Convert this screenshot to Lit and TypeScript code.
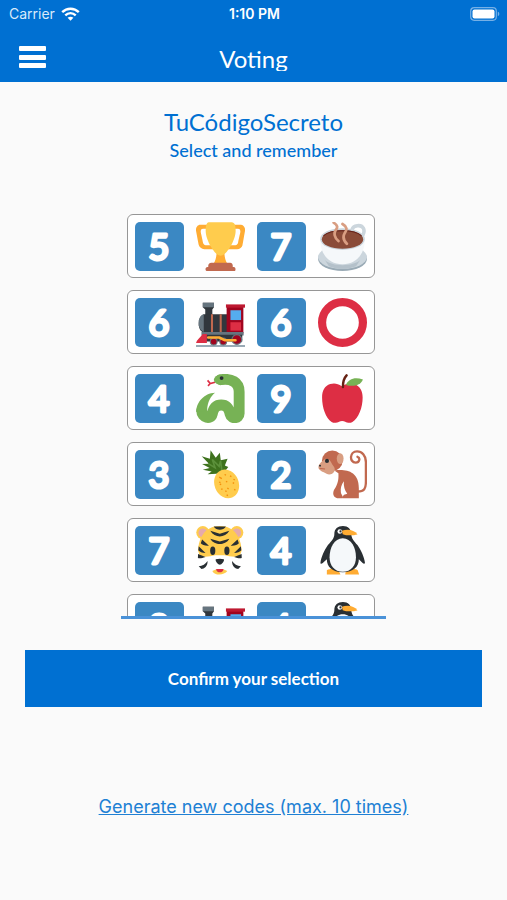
import { LitElement, html, svg, css } from "lit";
import { customElement, state } from "lit/decorators.js";
import { classMap } from "lit/directives/class-map.js";

const pictures: Record<string, unknown> = {
  trophy: svg`
    <path fill="#FFAC33" d="M5.123 5h6C12.227 5 13 4.896 13 6V4c0-1.104-.773-2-1.877-2h-8c-2 0-3.583 2.125-3 5 0 0 1.791 9.375 1.917 9.958C2.373 18.5 4.164 20 6.081 20h6.958c1.105 0-.039-1.896-.039-3v-2c0 1.104-.773 2-1.877 2h-4c-1.104 0-1.833-1.042-2-2S3.539 7.667 3.539 7.667C3.206 5.75 4.018 5 5.123 5zm25.812 0h-6C23.831 5 22 4.896 22 6V4c0-1.104 1.831-2 2.935-2h8c2 0 3.584 2.125 3 5 0 0-1.633 9.419-1.771 10-.354 1.5-2.042 3-4 3h-7.146C21.914 20 22 18.104 22 17v-2c0 1.104 1.831 2 2.935 2h4c1.104 0 1.834-1.042 2-2s1.584-7.333 1.584-7.333C32.851 5.75 32.04 5 30.935 5zM20.832 22c0-6.958-2.709 0-2.709 0s-3-6.958-3 0-3.291 10-3.291 10h12.292c-.001 0-3.292-3.042-3.292-10z"/>
    <path fill="#FFCC4D" d="M29.123 6.577c0 6.775-6.77 18.192-11 18.192-4.231 0-11-11.417-11-18.192 0-5.195 1-6.319 3-6.319 1.374 0 6.025-.027 8-.027l7-.001c2.917-.001 4 .684 4 6.347z"/>
    <path fill="#C1694F" d="M27 33c0 1.104.227 2-.877 2h-16C9.018 35 9 34.104 9 33v-1c0-1.104 1.164-2 2.206-2h13.917c1.042 0 1.877.896 1.877 2v1z"/>
    <path fill="#C1694F" d="M29 34.625c0 .76.165 1.375-1.252 1.375H8.498C7.206 36 7 35.385 7 34.625v-.25C7 33.615 7.738 33 8.498 33h19.25c.759 0 1.252.615 1.252 1.375v.25z"/>`,
  coffee: svg`
    <ellipse cx="18" cy="27" rx="18" ry="9" fill="#99AAB5"/>
    <ellipse cx="18" cy="25.8" rx="18" ry="8.6" fill="#CCD6DD"/>
    <path d="M5 28c5 5 21 5 26 0l-3 4.500c-6 2.500-14 2.500-20 0z" fill="#B4C1CA"/>
    <path d="M25 5.500C26 2.500 31.500 1.500 33.300 4.500c1.300 2.500-.3 6-3.300 9" fill="none" stroke="#CCD6DD" stroke-width="2.600"/>
    <path d="M1.600 12.500C1.600 24 8 31 18 31s16.400-7 16.400-18.500z" fill="#F5F8FA"/>
    <ellipse cx="18" cy="12.500" rx="16.400" ry="8" fill="#CCD6DD"/>
    <ellipse cx="18" cy="12.800" rx="15.200" ry="6.900" fill="#8A4B38"/>
    <path d="M4 10.200c5-5 23-5 28 0" fill="none" stroke="#65231B" stroke-width=".8"/>
    <path d="M11.500.500c3 2 3.200 3.300 1.500 5.500-1.500 2.200-1 5.500 2 8M18 1.500c3.500 2 3.500 4 1.700 6.500-1.500 2.500-1 5.500 1.500 8" fill="none" stroke="#D99E82" stroke-width="2" stroke-linecap="round"/>`,
  train: svg`
    <path d="M0 34.500h36v1.500H0z" fill="#99AAB5"/>
    <path d="M5 3.500h8.200v3.300l-1.200 1.700v5H6.800v-5L5 6.800z" fill="#31373D"/>
    <path d="M5 3.500h8.200v3.300H5z" fill="#66757F"/>
    <path d="M5.500 12H23v13.500H5.500C.8 24 .8 14 5.500 12z" fill="#31373D"/>
    <path d="M2 16.500c1-3 2-4 3.700-4.500v13c-2-1-3.300-3-3.700-5z" fill="#66757F"/>
    <path d="M11 12h1.500v13.500H11zM17.400 12h1.500v13.500h-1.500z" fill="#C1694F"/>
    <path d="M22.500 6h12.300v20H22.500z" fill="#A0041E"/>
    <path d="M22 4.700h14v2.400H22z" fill="#BE1931"/>
    <path d="M25.300 9h7.800v7.200h-7.800z" fill="#55ACEE"/>
    <path d="M25.300 17.800h7.800v6.200h-7.800z" fill="#DD2E44"/>
    <path d="M4 25h31v2.500H4z" fill="#66757F"/>
    <path d="M7 27h27v5H7z" fill="#31373D"/>
    <path d="M5 26.500h3V33H0c.5-2 3-4 5-6.500z" fill="#DD2E44"/>
    <g fill="#A0041E" stroke="#66757F" stroke-width=".8"><circle cx="13" cy="32" r="2.500"/><circle cx="20" cy="32" r="2.500"/><circle cx="30" cy="30.500" r="3.600"/></g>
    <path d="M9 29h8l4 2h8" fill="none" stroke="#FFAC33" stroke-width="1.900" stroke-linecap="round" stroke-linejoin="round"/>`,
  ring: svg`<circle cx="18" cy="18" r="15" fill="none" stroke="#DD2E44" stroke-width="6"/>`,
  snake: svg`
    <path d="M14 6l-3.500 1-2-2.300M10.500 7l-1.700 1.700" fill="none" stroke="#DD2E44" stroke-width="1.200"/>
    <path d="M18 4.200C26 3 31.700 6 31.700 13v16c0 3.700-5.700 4.300-6.500.8-.8-4-2.200-7-6.700-7s-5.900 3-6.700 7c-.8 3.500-7.600 2.700-7.600-2.800" fill="none" stroke="#77B255" stroke-width="8" stroke-linecap="round"/>
    <path d="M.2 28C0 21 6 14 14 13.800c-3 2.200-5.800 7-5.800 13z" fill="#77B255"/>
    <ellipse cx="18.500" cy="4.200" rx="5.400" ry="3.700" fill="#77B255"/>
    <circle cx="18.800" cy="3" r="1.400" fill="#292F33"/>`,
  apple: svg`
    <path d="M17.500 9c3-2 6-2.500 9-1.600 4.200 1.200 6.300 5.200 6.300 9.800 0 7.500-3 15-7.500 18-2 1.300-4 .5-5.300-.2-1.300-.6-3.200-.6-4.500 0-1.500.7-3.500 1.500-5.500.2C5.700 32.200 3 24.700 3 17.200c0-4.600 1.800-8.600 6-9.800 3-.9 5.500-.4 8.500 1.600z" fill="#DD2E44"/>
    <path d="M18.300 9.500c0-3.500.8-6.500 2.700-8.500" fill="none" stroke="#662113" stroke-width="1.800" stroke-linecap="round"/>
    <path d="M20.500 8C22.500 3.500 27 2 33 4c-1.500 4.500-7.500 5.500-12.500 4z" fill="#77B255"/>`,
  pineapple: svg`
    <path d="M15 17.500L8.500 17.800l3-2L5 14.500l5-1.200-5.500-3 5-.2L4.200 4.500l6 2L10.700.2l3.800 5.500 3-3.700.7 5.500 5-1-2 4.800 2.500 1.200-2.700 3.500z" fill="#3E721D"/>
    <path d="M9 10l5 3-2-6 5 5 1-4 1 7" fill="none" stroke="#5C913B" stroke-width="1.200"/>
    <ellipse cx="22.500" cy="24.900" rx="8.900" ry="10.800" transform="rotate(-22 22.500 24.900)" fill="#FFCC4D"/>
    <path d="M17 20l1 .5m3-2.500l1 .5m3 .5l1 .5m-9 4l1 .5m4-1l1 .5m4 .5l1 .5m-9.500 4l1 .5m3.500-1l1 .5m4 .5l1 .5m-6.500 3.500l1 .5m-6-8.500l1 .5m9-4l1 .5m-7 8l1 .5m-4.500-10l1 .5" stroke="#F4900C" stroke-width="1"/>`,
  monkey: svg`
    <path d="M29 30.500c5 0 6.200-2 6.200-7.500V9c0-5-3-8-6.500-8-5.500 0-6 8-1 8.300 3 0 3.500-3.700 1.300-4.300" fill="none" stroke="#C1694F" stroke-width="1.700" stroke-linecap="round"/>
    <path d="M12 15c8-1 18 0 18 13v7.500H18.200c-.5-2.500 2-3 3.300-3.300-2-2.500-2.800-5.700-2.500-9.200-2 3-2.500 5-2.200 8 .3 2 1.700 2.200 1.300 4.500h-4c-3.500-1-3.500-4.500-1.800-7 2-3.500 3-6 2.700-11.500z" fill="#C1694F"/>
    <circle cx="10.500" cy="7.900" r="7.600" fill="#C1694F"/>
    <path d="M5.500 6.500C3.500 8 .5 10 .3 12.500c-.2 2.500 3.500 3.500 6 5 4 1.800 8-2.500 5-5.800-2-2.200-2-5.500-5.800-5.200z" fill="#D99E82"/>
    <path d="M1.200 13.500l4 .4" stroke="#C1694F" stroke-width=".8"/>
    <circle cx="6.600" cy="8" r="1.500" fill="#292F33"/>
    <circle cx="1.500" cy="11.500" r=".7" fill="#292F33"/>
    <ellipse cx="16.300" cy="6.300" rx="2.500" ry="4" fill="#D99E82"/>`,
  tiger: svg`
    <g fill="#FFCC4D"><circle cx="5" cy="4.800" r="4.800"/><circle cx="30" cy="4.800" r="4.800"/></g>
    <g fill="#E6AAAA"><circle cx="5" cy="5" r="3.200"/><circle cx="30" cy="5" r="3.200"/></g>
    <path d="M17.500 0C7 0 2 8 1.500 18l2 6h28l2-6C33 8 28 0 17.500 0z" fill="#FFCC4D"/>
    <path d="M1.500 22c5 1 9 .5 12.500-.5h7c3.500 1 7.500 1.500 12.500.5-.5 6-8 12.500-16 12.500S2 28 1.500 22z" fill="#FFF"/>
    <path d="M12 33c3-2 8-2 11 0-2 3-9 4-11 0z" fill="#FFCC4D"/>
    <path d="M14.800 31.500h5.400c0 3.300-5.400 3.300-5.400 0z" fill="#DD2E44"/>
    <g fill="#292F33"><path d="M13 .4h9c-1 1.700-2.800 2.400-4.500 2.400S14 2.100 13 .4zM10.500 3.500l7 2.200 7-2.200c-1.500 2.800-4.500 4.200-7 4.200s-5.500-1.400-7-4.200zM10.500 9.300l7 2 7-2c-1.500 2.700-4.500 3.900-7 3.900s-5.500-1.200-7-3.900z"/><path d="M4.500 10l5 4.500c-3 .2-5-.6-6-1.800zM2 14.800l5 5c-2.500 0-4.300-.8-5.300-2zM1.500 20.500l5.500 2.200c-2.500 1-4.300 1.200-5.600.8zM2 29.500c2.800-.2 5-1.500 6.500-3.800.2 3.800-2.500 5.800-4.500 5.800z"/><path d="M30.500 10l-5 4.500c3 .2 5-.6 6-1.800zM33 14.800l-5 5c2.500 0 4.300-.8 5.300-2zM33.500 20.500l-5.500 2.200c2.500 1 4.300 1.200 5.600.8zM33 29.500c-2.800-.2-5-1.500-6.500-3.800-.2 3.800 2.500 5.800 4.500 5.800z"/><ellipse cx="12.300" cy="18.200" rx="1.900" ry="3.100"/><ellipse cx="22.700" cy="18.200" rx="1.900" ry="3.100"/><path d="M14.500 24.500c2-.7 4-.7 6 0 .6 1.500-1.800 4-3 4s-3.600-2.500-3-4z"/></g>`,
  penguin: svg`
    <path d="M6.500 32.500c2-1.500 7-1.500 8.500 0l1.500 3.200h-10zM20.500 32.500c2-1.500 7-1.500 8.700 0l1 3.200H20z" fill="#FFAC33"/>
    <path d="M12 6C12 2 14.500 0 18.300 0s6.200 2.500 6.200 6c0 3 2 5 4.500 8 2.500 3.500 5 9 5.500 13 0 1-1 1-1.700.2L30 24.500c0 5.500-4 9.500-11.800 9.500S6.500 30 6.500 24.500l-3 2.700c-.8.800-1.800.8-1.700-.2.500-4 3-9.500 5.500-13C9.800 11 12 9 12 6z" fill="#292F33"/>
    <path d="M18.200 9c6.200 0 9.700 7 9.700 14 0 6-3.500 10.700-9.700 10.700S8.500 29 8.500 23c0-7 3.500-14 9.700-14z" fill="#F5F8FA"/>
    <path d="M17.500 3.500c4-1.500 9-1 11.500 2.700-3 .8-8 1-10.800-.2z" fill="#FFAC33"/>
    <circle cx="16" cy="4" r="1.700" fill="#FFF"/><circle cx="16.500" cy="4" r=".8" fill="#292F33"/>`,
};

const codes: string[][] = [
  ["5", "trophy", "7", "coffee"],
  ["6", "train", "6", "ring"],
  ["4", "snake", "9", "apple"],
  ["3", "pineapple", "2", "monkey"],
  ["7", "tiger", "4", "penguin"],
  ["8", "train", "4", "penguin"],
];

@customElement("app-root")
export class AppRoot extends LitElement {
  @state() private selected = -1;

  static styles = css`
    :host {
      display: block;
      min-height: 100vh;
      background: #fafafa;
      color: #0070d2;
      font-family: Lato, Carlito, sans-serif;
    }
    * { box-sizing: border-box; }
    button { font: inherit; cursor: pointer; }
    .top { background: #0070d2; color: #fff; }
    .status {
      display: grid;
      grid-template-columns: 1fr auto 1fr;
      align-items: center;
      height: 28px;
      padding: 0 7px 0 9px;
      font: 14px/20px Inter, sans-serif;
    }
    .carrier { display: flex; align-items: center; gap: 6px; color: #d9eafa; }
    .time { font-weight: 600; }
    .battery { justify-self: end; display: block; }
    .nav {
      display: grid;
      grid-template-columns: 1fr auto 1fr;
      align-items: center;
      height: 54px;
      padding: 4px 18px 0;
    }
    .menu { display: block; width: 28px; padding: 0; border: 0; background: none; }
    .menu svg { display: block; }
    .heading { margin: 0; height: 28px; overflow: hidden; font-size: 24px; line-height: 32px; font-weight: 400; }
    main { display: flex; flex-direction: column; align-items: center; padding: 24px 25px; }
    .title { margin: 0; font-size: 24px; line-height: 32px; font-weight: 400; }
    .subtitle { margin: 0; font-size: 18px; line-height: 24px; font-weight: 500; }
    .list {
      width: 265px;
      max-width: 100%;
      height: 405px;
      margin-top: 52px;
      padding-left: 6px;
      overflow-y: auto;
      scrollbar-width: none;
      border-bottom: 3px solid #4a92d8;
      display: flex;
      flex-direction: column;
      gap: 12px;
    }
    .code {
      flex: none;
      display: flex;
      align-items: center;
      gap: 12px;
      width: 248px;
      height: 64px;
      padding: 0 7px;
      border: 1px solid #969696;
      border-radius: 6px;
      background: #fff;
    }
    .code.on { background: #d9eafa; }
    .pic { display: block; width: 49px; height: 49px; }
    .tile { border-radius: 5px; background: #3b88c3; }
    .digit {
      fill: #fff;
      stroke: #fff;
      stroke-width: 3px;
      stroke-linejoin: round;
      stroke-linecap: round;
      font-size: 36px;
      font-weight: 500;
      text-anchor: middle;
    }
    .confirm {
      align-self: stretch;
      height: 57px;
      margin-top: 31px;
      border: 0;
      background: #0070d2;
      color: #fff;
      font-size: 17px;
      font-weight: 700;
    }
    .again { margin-top: 88px; color: #2080d4; font: 18px/24px Inter, sans-serif; }
  `;

  render() {
    return html`
      <header class="top">
        <div class="status">
          <span class="carrier">Carrier
            <svg width="19" height="14" viewBox="0 0 19 14" fill="none" stroke="#fff" stroke-width="2.400" aria-hidden="true">
              <path d="M1.200 5.200c4.700-4.600 11.900-4.600 16.600 0M4.300 8.300c3-2.900 7.400-2.900 10.400 0"/>
              <path d="M9.500 13.800L6.600 10.800c1.700-1.500 4.100-1.500 5.800 0z" fill="#fff" stroke="none"/>
            </svg>
          </span>
          <span class="time">1:10 PM</span>
          <svg class="battery" width="30" height="14" viewBox="0 0 30 14" aria-hidden="true">
            <rect x=".7" y=".7" width="25.600" height="12.600" rx="3.500" fill="none" stroke="#76b0e6" stroke-width="1.200"/>
            <rect x="2.500" y="2.500" width="22" height="9" rx="2" fill="#fff"/>
            <path d="M27.800 4.800c2 .6 2 3.800 0 4.400z" fill="#76b0e6"/>
          </svg>
        </div>
        <div class="nav">
          <button class="menu" aria-label="Menu">
            <svg width="28" height="24" viewBox="0 0 28 24" fill="#fff">
              <rect x="1" y="1" width="27" height="5" rx="1"/>
              <rect x="1" y="10" width="27" height="5" rx="1"/>
              <rect x="1" y="18" width="27" height="5" rx="1"/>
            </svg>
          </button>
          <h1 class="heading">Voting</h1>
        </div>
      </header>
      <main>
        <h2 class="title">TuCódigoSecreto</h2>
        <p class="subtitle">Select and remember</p>
        <div class="list">
          ${codes.map((code, i) => html`
            <button
              class=${classMap({ code: true, on: this.selected === i })}
              aria-label=${code.join(" ")}
              aria-pressed=${this.selected === i ? "true" : "false"}
              @click=${() => (this.selected = i)}
            >${code.map((s) => pictures[s]
              ? html`<svg class="pic" viewBox="0 0 36 36" aria-hidden="true">${pictures[s]}</svg>`
              : html`<svg class="pic tile" viewBox="0 0 49 49"><text class="digit" x="24" y="38">${s}</text></svg>`)}</button>`)}
        </div>
        <button class="confirm">Confirm your selection</button>
        <a class="again" href="#new">Generate new codes (max. 10 times)</a>
      </main>
    `;
  }
}
